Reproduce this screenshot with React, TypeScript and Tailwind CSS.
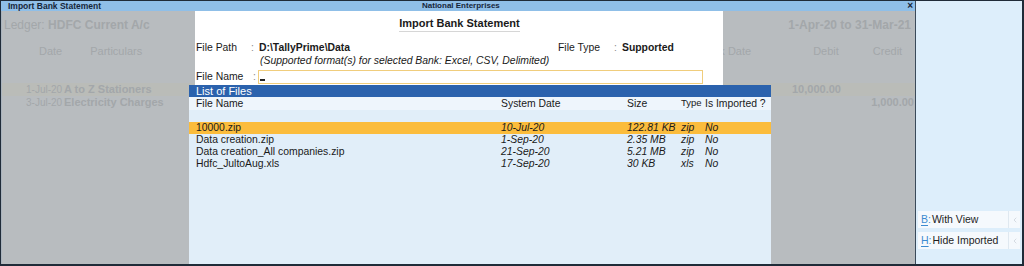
import { ChevronLeft } from 'lucide-react';

const files = [
  { name: '10000.zip', date: '10-Jul-20', size: '122.81 KB', type: 'zip', imported: 'No' },
  { name: 'Data creation.zip', date: '1-Sep-20', size: '2.35 MB', type: 'zip', imported: 'No' },
  { name: 'Data creation_All companies.zip', date: '21-Sep-20', size: '5.21 MB', type: 'zip', imported: 'No' },
  { name: 'Hdfc_JultoAug.xls', date: '17-Sep-20', size: '30 KB', type: 'xls', imported: 'No' },
];

const entries = [
  { date: '1-Jul-20', particulars: 'A to Z Stationers', debit: '10,000.00', credit: '', active: true },
  { date: '3-Jul-20', particulars: 'Electricity Charges', debit: '', credit: '1,000.00', active: false },
];

function SideButton({ hotkey, label }: { hotkey: string; label: string }) {
  return (
    <div className="flex h-[17px] items-center bg-[#f5f9fd] text-[10.5px] leading-none">
      <div className="flex flex-1 items-center pl-[3px]">
        <span className="text-[#3d8bd0] underline underline-offset-2">{hotkey}</span>
        <span className="mr-[1px] text-[#3d8bd0]">:</span>
        <span className="text-[#1e1e1e]">{label}</span>
      </div>
      <div className="flex h-full w-[12px] items-center justify-center border-l border-[#dfe8f0]">
        <ChevronLeft className="h-[8px] w-[8px] text-[#c4ccd4]" strokeWidth={2} />
      </div>
    </div>
  );
}

export default function App() {
  return (
    <div
      className="flex h-[266px] w-[1024px] bg-[#1f2b38] pt-[1px] pr-[2px] pb-[2px] pl-[1px]"
      style={{ fontFamily: '"Liberation Sans", Arial, sans-serif' }}
    >
      {/* Left: report window */}
      <div className="flex w-[914px] flex-col">
        <div className="relative flex h-[10px] items-center bg-[#8fbfe8] text-[8px] font-bold text-[#16263a]">
          <span className="pl-[7px] text-[8.5px]">Import Bank Statement</span>
          <span className="absolute left-[421px]">National Enterprises</span>
          <span className="absolute right-[2px] text-[10px] leading-none">×</span>
        </div>

        <div className="relative flex-1 border-l border-[#a9b3bd] bg-[#b8bcbf] text-[#a3a7aa]">
          {/* Dimmed report behind */}
          <div className="flex items-center justify-between pt-[7px] pr-[4px] pl-[2px] text-[12px] leading-[14px]">
            <span>
              Ledger: <span className="font-bold">HDFC Current A/c</span>
            </span>
            <span className="font-bold">1-Apr-20 to 31-Mar-21</span>
          </div>
          <div className="mt-[13px] flex text-[11px] leading-[13px] whitespace-nowrap">
            <span className="ml-[37px]">Date</span>
            <span className="ml-[28px]">Particulars</span>
            <span className="ml-[571px]">nk Date</span>
            <span className="ml-[62px]">Debit</span>
            <span className="ml-[34px]">Credit</span>
          </div>
          <div className="mt-[25px] flex flex-col">
            {entries.map((e) => (
              <div
                key={e.date}
                className={`flex h-[13px] items-center text-[11px] whitespace-nowrap ${e.active ? 'bg-[#babcb8]' : ''}`}
              >
                <span className="ml-[24px] w-[38px] text-[10px]">{e.date}</span>
                <span className="w-[728px] font-bold">{e.particulars}</span>
                <span className="w-[50px] font-bold">{e.debit}</span>
                <span className="w-[72px] text-right font-bold">{e.credit}</span>
              </div>
            ))}
          </div>

          {/* Modal over report */}
          <div className="absolute top-0 bottom-0 left-[187px] flex w-[582px] flex-col text-[10.4px] text-[#1a1a1a]">
            <div className="ml-[6px] h-[74px] w-[528px] bg-white pl-[1px]">
              <div className="flex justify-center pt-[6px]">
                <span className="border-b border-[#d6d6d6] pb-[1px] text-[11px] font-bold leading-[13px]">
                  Import Bank Statement
                </span>
              </div>
              <div className="mt-[9px] flex leading-[13px]">
                <span className="w-[55px]">File Path</span>
                <span className="w-[8px] text-[#8a8a8a]">:</span>
                <span className="w-[299px] font-bold">D:\TallyPrime\Data</span>
                <span className="w-[56px]">File Type</span>
                <span className="w-[8px] text-[#8a8a8a]">:</span>
                <span className="font-bold">Supported</span>
              </div>
              <div className="ml-[64px] italic leading-[13px]">
                (Supported format(s) for selected Bank: Excel, CSV, Delimited)
              </div>
              <div className="mt-[2px] flex items-center">
                <span className="w-[57px]">File Name</span>
                <span className="w-[5px] text-[#8a8a8a]">:</span>
                <div className="flex h-[14px] w-[445px] items-end border border-[#f0cd7c] pb-[2px] pl-[1px]">
                  <span className="h-[2px] w-[5px] bg-[#222]" />
                </div>
              </div>
            </div>

            <div className="flex flex-1 flex-col bg-[#e1eef9]">
              <div className="h-[12px] bg-[#2b62ad] pl-[7px] text-[11px] leading-[12px] text-white">List of Files</div>
              <div className="flex h-[13px] items-center bg-[#eef5fc]">
                <span className="w-[312px] pl-[7px]">File Name</span>
                <span className="w-[126px]">System Date</span>
                <span className="w-[54px]">Size</span>
                <span className="w-[24px] text-[9.5px]">Type</span>
                <span>Is Imported ?</span>
              </div>
              <div className="mt-[12px] flex flex-col">
                {files.map((f, i) => (
                  <div
                    key={f.name}
                    className={`flex h-[12px] items-center leading-none ${i === 0 ? 'bg-[#fbbc3c]' : ''}`}
                  >
                    <span className="w-[312px] pl-[7px]">{f.name}</span>
                    <span className="w-[126px] italic">{f.date}</span>
                    <span className="w-[54px] italic">{f.size}</span>
                    <span className="w-[24px] italic">{f.type}</span>
                    <span className="italic">{f.imported}</span>
                  </div>
                ))}
              </div>
            </div>
          </div>
        </div>
      </div>

      {/* Right: button panel */}
      <div className="flex flex-1 flex-col border-l border-[#3a4a5a] bg-[#ddeefb] px-[2px]">
        <div className="mt-[210px] flex flex-col gap-[4px]">
          <SideButton hotkey="B" label="With View" />
          <SideButton hotkey="H" label="Hide Imported" />
        </div>
      </div>
    </div>
  );
}
